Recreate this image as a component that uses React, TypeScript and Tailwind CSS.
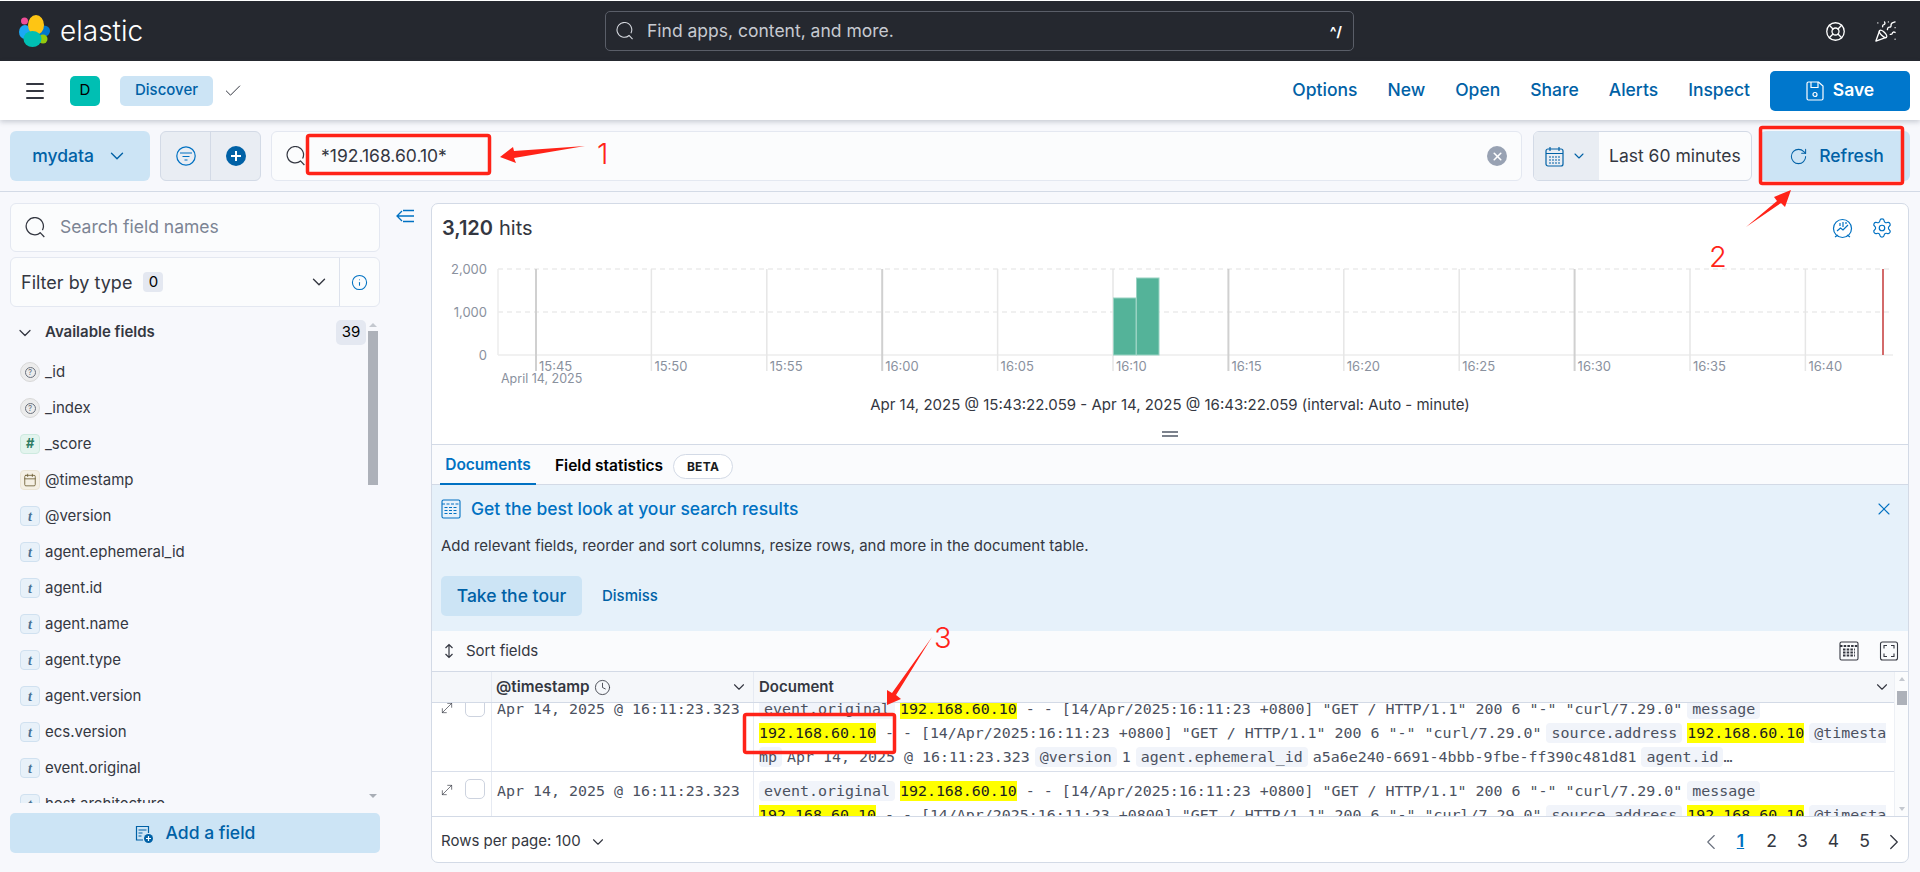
import {
  Menu,
  Check,
  ChevronDown,
  ChevronLeft,
  ChevronRight,
  LifeBuoy,
  PartyPopper,
  RotateCw,
  Calendar,
  Info,
  Settings,
  Clock,
  X,
  MoveDiagonal,
} from "lucide-react";

const fields: [string, string][] = [
  ["_id", "q"],
  ["_index", "q"],
  ["_score", "n"],
  ["@timestamp", "d"],
  ["@version", "t"],
  ["agent.ephemeral_id", "t"],
  ["agent.id", "t"],
  ["agent.name", "t"],
  ["agent.type", "t"],
  ["agent.version", "t"],
  ["ecs.version", "t"],
  ["event.original", "t"],
  ["host.architecture", "t"],
];

const IP = "192.168.60.10";
const LOG = ' - - [14/Apr/2025:16:11:23 +0800] "GET / HTTP/1.1" 200 6 "-" "curl/7.29.0"';
const ticks = ["15:45", "15:50", "15:55", "16:00", "16:05", "16:10", "16:15", "16:20", "16:25", "16:30", "16:35", "16:40"];

function Logo() {
  return (
    <svg width="32" height="32" viewBox="0 0 32 32">
      <ellipse cx="5.5" cy="6" rx="3.5" ry="3.5" fill="#f04e98" />
      <ellipse cx="6" cy="17" rx="6" ry="7" fill="#1ba9f5" />
      <ellipse cx="25" cy="16" rx="6" ry="5.5" fill="#0077cc" />
      <ellipse cx="24" cy="24" rx="4.5" ry="4.5" fill="#93c90e" />
      <ellipse cx="17" cy="10" rx="8" ry="10" fill="#fec514" />
      <ellipse cx="13.5" cy="24" rx="9" ry="8" fill="#00bfb3" />
    </svg>
  );
}

function SearchIcon({ size, color = "#343741" }: { size: number; color?: string }) {
  return (
    <svg width={size} height={size} viewBox="0 0 20 20" fill="none" stroke={color} strokeWidth="1.2" className="shrink-0">
      <path d="M14.6 15A8.2 8.2 0 1 1 16.6 12.5" />
      <path d="M14.2 14.6 18.4 19" />
    </svg>
  );
}

function FieldIcon({ kind }: { kind: string }) {
  if (kind === "q")
    return (
      <span className="w-5 h-5 shrink-0 rounded-full bg-[#ececec] border border-[#d8d8d8] flex items-center justify-center">
        <span className="w-[11px] h-[11px] rounded-full border border-[#69707d] text-[8px] leading-[9px] text-center text-[#69707d]">?</span>
      </span>
    );
  if (kind === "n")
    return (
      <span className="w-5 h-5 shrink-0 rounded-[4px] bg-[#e3f4ee] border border-[#cdeadf] flex items-center justify-center text-[13px] font-bold italic text-[#2f7d64]">#</span>
    );
  if (kind === "d")
    return (
      <span className="w-5 h-5 shrink-0 rounded-[4px] bg-[#f5f0e4] border border-[#ebe4d4] flex items-center justify-center">
        <Calendar size={14} strokeWidth={1.4} className="text-[#69592f]" />
      </span>
    );
  return (
    <span className="w-5 h-5 shrink-0 rounded-[4px] bg-[#e8f1f9] border border-[#d0e1f0] flex items-center justify-center text-[14px] font-bold italic text-[#4a7194] font-['Liberation_Serif',serif]">t</span>
  );
}

function Tag({ children }: { children: React.ReactNode }) {
  return <span className="inline-block h-5 leading-[20px] px-[5px] mr-[5px] rounded-[4px] bg-[#f1f4fa] align-top">{children}</span>;
}

function Mark({ gap }: { gap?: boolean }) {
  return <span className={gap ? "inline-block h-5 leading-[20px] bg-[#ffff00] text-[#1a1c21] align-top mr-[5px]" : "inline-block h-5 leading-[20px] bg-[#ffff00] text-[#1a1c21] align-top"}>{IP}</span>;
}

function Value({ children }: { children: React.ReactNode }) {
  return <span className="inline-block h-5 leading-[20px] mr-[5px] align-top">{children}</span>;
}

function Line({ children }: { children: React.ReactNode }) {
  return <div className="h-6 whitespace-pre overflow-hidden">{children}</div>;
}

function DocRow({ full }: { full?: boolean }) {
  return (
    <div className="flex h-[82px] border-b border-[#d9dfea] font-['DejaVu_Sans_Mono',monospace] text-[14.95px] text-[#4b5160] shrink-0">
      <div className="w-[59px] shrink-0 flex pt-[7px] pl-[7px] gap-[10px]">
        <MoveDiagonal size={16} strokeWidth={1} className="text-[#343741] mt-[3px]" />
        <span className="w-5 h-5 rounded-[5px] border border-[#cdd3df] bg-white" />
      </div>
      <div className="w-[262px] shrink-0 border-l border-[#e6eaf2] pt-[9px] pl-[5px] leading-[20px]">Apr 14, 2025 @ 16:11:23.323</div>
      <div className="flex-1 min-w-0 border-l border-[#e6eaf2] pt-[9px] pl-[5px] pr-[8px]">
        <Line>
          <Tag>event.original</Tag>
          <Mark />
          <Value>{LOG}</Value>
          <Tag>message</Tag>
        </Line>
        <Line>
          <Mark />
          <Value>{LOG}</Value>
          <Tag>source.address</Tag>
          <Mark gap />
          <Tag>@timesta</Tag>
        </Line>
        {full && (
          <Line>
            <span className="inline-block h-5 leading-[20px] pr-[5px] mr-[5px] rounded-[4px] bg-[#f1f4fa] align-top">mp</span>
            <Value>Apr 14, 2025 @ 16:11:23.323</Value>
            <Tag>@version</Tag>
            <Value>1</Value>
            <Tag>agent.ephemeral_id</Tag>
            <Value>a5a6e240-6691-4bbb-9fbe-ff390c481d81</Value>
            <span className="inline-block h-5 leading-[20px] px-[5px] rounded-[4px] bg-[#f1f4fa] align-top">agent.id</span>
            <span className="inline-block h-5 leading-[20px] align-top">…</span>
          </Line>
        )}
      </div>
    </div>
  );
}

function Chart() {
  return (
    <svg className="block w-full h-[138px]" viewBox="432 252 1476 138" fontFamily="Inter, sans-serif" fontSize="13">
      <line x1="498" x2="1893" y1="269" y2="269" stroke="#ececec" strokeWidth="1.5" strokeDasharray="5 4" />
      <line x1="498" x2="1893" y1="312" y2="312" stroke="#ececec" strokeWidth="1.5" strokeDasharray="5 4" />
      <line x1="498" x2="1893" y1="355" y2="355" stroke="#ececec" strokeWidth="1.5" />
      <line x1="498" x2="498" y1="269" y2="355" stroke="#ececec" strokeWidth="1.5" />
      {["2,000", "1,000", "0"].map((t, i) => (
        <text key={t} x="487" y={274 + i * 43} textAnchor="end" fill="#8a919e">{t}</text>
      ))}
      {ticks.map((t, i) => {
        const x = 536 + i * 115.4;
        const major = i % 3 === 0;
        return (
          <g key={t}>
            <line x1={x} x2={x} y1="269" y2="371" stroke={major ? "#d0d0d0" : "#e6e6e6"} strokeWidth={major ? 2 : 1.5} />
            <text x={x + 3} y="371" fill="#8a919e">{t}</text>
          </g>
        );
      })}
      <text x="501" y="383" fontSize="12.5" fill="#8a919e">April 14, 2025</text>
      <rect x="1113.5" y="298" width="22.5" height="57" fill="#54b399" stroke="#98d2c2" strokeWidth="1" />
      <rect x="1136.5" y="278" width="22.5" height="77" fill="#54b399" stroke="#98d2c2" strokeWidth="1" />
      <line x1="1883" x2="1883" y1="269" y2="355" stroke="#d36a6a" strokeWidth="2" />
    </svg>
  );
}

function Annotations() {
  return (
    <svg className="absolute inset-0 pointer-events-none" width="1920" height="872" viewBox="0 0 1920 872" fontFamily="Inter, sans-serif" fontWeight="300" fill="#ff2318">
      <rect x="307.5" y="135.5" width="182" height="38" rx="2" fill="none" stroke="#ff2318" strokeWidth="3.5" />
      <polygon points="585,146 514,151 513,147 500,157 516,163 514,158" />
      <text x="597" y="164" fontSize="29">1</text>
      <rect x="1760.5" y="127.5" width="142" height="56" rx="2" fill="none" stroke="#ff2318" strokeWidth="3.5" />
      <polygon points="1746,227 1777,201 1774,197 1791,190 1785,207 1781,203" />
      <text x="1709" y="267" fontSize="29">2</text>
      <rect x="744.5" y="714.5" width="150" height="38" rx="2" fill="none" stroke="#ff2318" strokeWidth="3.5" />
      <polygon points="932,637 896,695 901,699 887,705 887,690 892,693" />
      <text x="934" y="648" fontSize="29">3</text>
    </svg>
  );
}

export default function App() {
  return (
    <div className="relative w-full h-[872px] overflow-hidden flex flex-col bg-[#f7f8fc] text-[#343741] font-['Inter',sans-serif]">
      {/* global header */}
      <div className="h-[61px] shrink-0 border-t border-white bg-[#25282f] flex items-center relative">
        <div className="flex items-center pl-[19px] w-[605px]">
          <Logo />
          <span className="ml-[9px] text-[28px] font-light text-white leading-none">elastic</span>
        </div>
        <div className="w-[749px] h-10 border border-[#5a5e68] rounded-[5px] flex items-center pl-[10px] pr-[11px] text-[#c7cad1]">
          <SearchIcon size={18} color="#d5d8de" />
          <span className="ml-[13px] text-[17.5px]">Find apps, content, and more.</span>
          <span className="ml-auto text-[14px] font-bold text-white">^/</span>
        </div>
        <LifeBuoy size={21} strokeWidth={1.5} className="ml-[471px] text-white" />
        <PartyPopper size={23} strokeWidth={1.4} className="ml-[28px] text-white" />
      </div>

      {/* app menu */}
      <div className="h-[59px] shrink-0 bg-white flex items-center relative z-10 shadow-[0_2px_5px_rgba(60,70,90,0.25)]">
        <Menu size={24} strokeWidth={2} className="ml-[23px] text-[#343741]" />
        <span className="ml-[23px] w-[30px] h-[30px] rounded-[5px] bg-[#00bfb3] flex items-center justify-center text-[15px] text-black">D</span>
        <span className="ml-5 w-[93px] h-[30px] rounded-[5px] bg-[#cce4f5] flex items-center justify-center text-[15px] font-medium text-[#0061a6]">Discover</span>
        <Check size={20} strokeWidth={1.2} className="ml-[10px] text-[#343741]" />
        <div className="ml-auto flex items-center gap-[30px] text-[17.5px] font-medium text-[#0061a6]">
          <span>Options</span>
          <span>New</span>
          <span>Open</span>
          <span>Share</span>
          <span>Alerts</span>
          <span>Inspect</span>
        </div>
        <div className="ml-5 mr-[10px] w-[140px] h-10 rounded-[5px] bg-[#0077cc] flex items-center justify-center gap-[9px] text-white text-[17.5px] font-semibold">
          <svg width="18" height="20" viewBox="0 0 18 20" fill="none" stroke="#fff" strokeWidth="1.2">
            <path d="M2.5 1h10L17 5v12.5a1.5 1.5 0 0 1-1.5 1.5h-13A1.5 1.5 0 0 1 1 17.5v-15A1.5 1.5 0 0 1 2.5 1Z" />
            <path d="M5 1v5.5h7V1" />
            <circle cx="9" cy="13.5" r="2" />
          </svg>
          Save
        </div>
      </div>

      {/* query bar */}
      <div className="h-[72px] shrink-0 border-b border-[#d3dae6] px-[10px] pt-[11px] flex">
        <div className="w-[140px] h-[50px] rounded-[6px] bg-[#cce4f5] flex items-center justify-center gap-[12px] text-[17.5px] font-medium text-[#0061a6]">
          mydata
          <ChevronDown size={22} strokeWidth={1.5} />
        </div>
        <div className="ml-[10px] w-[101px] h-[50px] rounded-[6px] border border-[#d3dae6] bg-[#e9edf3] flex">
          <div className="w-[50px] flex items-center justify-center border-r border-[#d3dae6]">
            <svg width="20" height="20" viewBox="0 0 20 20" fill="none" stroke="#0071c2" strokeWidth="1.2">
              <circle cx="10" cy="10" r="9.2" />
              <path d="M4 7h12M6.5 10.5h7M8.5 14h3" />
            </svg>
          </div>
          <div className="flex-1 flex items-center justify-center">
            <svg width="20" height="20" viewBox="0 0 20 20">
              <circle cx="10" cy="10" r="10" fill="#0061a6" />
              <path d="M10 5v10M5 10h10" stroke="#fff" strokeWidth="2" />
            </svg>
          </div>
        </div>
        <div className="ml-[10px] w-[1251px] h-[50px] rounded-[6px] border border-[#e4e8f1] bg-[#fbfcfd] flex items-center pl-[14px] pr-[14px]">
          <SearchIcon size={20} />
          <span className="ml-[15px] text-[17.5px]">*192.168.60.10*</span>
          <span className="ml-auto w-5 h-5 rounded-full bg-[#98a2b3] flex items-center justify-center">
            <X size={13} strokeWidth={3} className="text-white" />
          </span>
        </div>
        <div className="ml-[11px] w-[219px] h-[50px] rounded-[6px] border border-[#d3dae6] bg-[#fbfcfd] flex items-center overflow-hidden">
          <div className="w-[65px] h-full bg-[#e9edf3] flex items-center pl-[11px] gap-[7px] text-[#0061a6]">
            <svg width="19" height="21" viewBox="0 0 19 21" fill="none" stroke="currentColor" strokeWidth="1.2">
              <rect x="1" y="3" width="17" height="17" rx="2" />
              <path d="M1 7.5h17M5 1v4M14 1v4M4 11h11M4 14h11M4 17h11" />
              <path d="M6.5 9.5v9M9.5 9.5v9M12.5 9.5v9" stroke="#e9edf3" strokeWidth="1" />
            </svg>
            <ChevronDown size={16} strokeWidth={1.6} />
          </div>
          <span className="ml-[10px] text-[17.5px] whitespace-nowrap">Last 60 minutes</span>
        </div>
        <div className="ml-2 w-[150px] h-[50px] rounded-[6px] bg-[#cce4f5] flex items-center justify-center gap-[11px] pl-[3px] text-[17.5px] font-medium text-[#0061a6]">
          <RotateCw size={19} strokeWidth={1.3} />
          Refresh
        </div>
      </div>

      {/* content */}
      <div className="flex-1 min-h-0 flex">
        {/* sidebar */}
        <div className="w-[381px] shrink-0 flex flex-col pt-[11px] pl-[10px] pr-px">
          <div className="h-[49px] rounded-[6px] border border-[#e4e8f1] bg-[#fbfcfd] flex items-center pl-[14px]">
            <SearchIcon size={21} />
            <span className="ml-[14px] text-[17.5px] text-[#7c8494]">Search field names</span>
          </div>
          <div className="mt-[5px] h-[50px] rounded-[6px] border border-[#e4e8f1] bg-[#fbfcfd] flex items-center pl-[10px]">
            <span className="text-[18px]">Filter by type</span>
            <span className="ml-[11px] w-5 h-5 rounded-[4px] bg-[#e4e8f1] text-[15px] text-black flex items-center justify-center">0</span>
            <ChevronDown size={22} strokeWidth={1.5} className="ml-auto mr-[9px]" />
            <div className="w-10 h-full border-l border-[#dde2ec] flex items-center justify-center">
              <Info size={17} strokeWidth={1.5} className="text-[#0071c2]" />
            </div>
          </div>
          <div className="mt-[13px] h-[483px] flex overflow-hidden">
            <div className="flex-1 min-w-0">
              <div className="h-[25px] flex items-center pl-[5px] pr-[2px]">
                <ChevronDown size={20} strokeWidth={1.5} />
                <span className="ml-[10px] text-[15px] font-semibold">Available fields</span>
                <span className="ml-auto w-[30px] h-[25px] rounded-[5px] bg-[#e4e8f1] text-[15px] text-black flex items-center justify-center">39</span>
              </div>
              <div className="mt-[9px]">
                {fields.map(([name, kind]) => (
                  <div key={name} className="h-9 flex items-center pl-[10px] gap-[5px] text-[15px]">
                    <FieldIcon kind={kind} />
                    <span>{name}</span>
                  </div>
                ))}
              </div>
            </div>
            <div className="w-[10px] mr-[2px] flex flex-col items-center">
              <span className="mt-[3px] w-0 h-0 border-x-[4px] border-x-transparent border-b-[4px] border-b-[#c4c8cf]" />
              <span className="mt-[4px] w-[10px] h-[154px] bg-[#adb1b9]" />
              <span className="mt-auto mb-[5px] w-0 h-0 border-x-[4px] border-x-transparent border-t-[4px] border-t-[#a8adb5]" />
            </div>
          </div>
          <div className="mt-[10px] mb-[19px] h-10 rounded-[5px] bg-[#cce4f5] flex items-center justify-center gap-[13px] pt-[1px] text-[17.5px] font-medium text-[#0061a6]">
            <svg width="18" height="18" viewBox="0 0 18 18" fill="none" stroke="#0061a6" strokeWidth="1.2">
              <path d="M8 15H1.5V1.5h12V8M3.5 5h8M3.5 8h4M3.5 11h3" />
              <circle cx="13.5" cy="13.5" r="4.5" fill="#0061a6" stroke="none" />
              <path d="M13.5 11v5M11 13.5h5" stroke="#fff" />
            </svg>
            Add a field
          </div>
        </div>

        {/* collapse */}
        <div className="w-[50px] shrink-0 pt-[17px] pl-[15px]">
          <svg width="19" height="14" viewBox="0 0 19 14" fill="none" stroke="#0071c2" strokeWidth="1.3">
            <path d="M6 2 1 7l5 5M1 7h17M7 1.5h11M7 12.5h11" />
          </svg>
        </div>

        {/* main card */}
        <div className="w-[1478px] mt-[11px] mb-[9px] rounded-[7px] border border-[#d3dae6] bg-white flex flex-col overflow-hidden">
          <div className="h-[241px] shrink-0 border-b border-[#d3dae6] flex flex-col">
            <div className="h-[48px] shrink-0 flex items-center pl-[10px] pr-[15px] text-[20px]">
              <span className="font-semibold">3,120</span>
              <span className="ml-[6px]">hits</span>
              <svg className="ml-auto text-[#0071c2]" width="21" height="21" viewBox="0 0 21 21" fill="none" stroke="currentColor" strokeWidth="1.2">
                <circle cx="10.5" cy="10.5" r="9" />
                <path d="M5 13l3.5-3 2.5 2 5-5M8 5v3M11 4v5M14 4v2M3 19l3-2M18 19l-3-2" />
              </svg>
              <Settings size={22} strokeWidth={1.3} className="ml-[18px] text-[#0071c2]" />
            </div>
            <Chart />
            <div className="h-[30px] shrink-0 flex items-center justify-center text-[15px]">
              Apr 14, 2025 @ 15:43:22.059 - Apr 14, 2025 @ 16:43:22.059 (interval: Auto - minute)
            </div>
            <div className="flex-1 flex flex-col items-center justify-center gap-[2px] pt-[4px]">
              <span className="w-4 h-[2px] bg-[#7c828d]" />
              <span className="w-4 h-[2px] bg-[#7c828d]" />
            </div>
          </div>

          {/* tabs */}
          <div className="h-10 shrink-0 bg-[#fafbfd] border-b border-[#d3dae6] flex pl-[8px] text-[15.5px] font-semibold">
            <span className="h-10 w-[96px] pt-[2px] flex items-center justify-center text-[#0071c2] border-b-2 border-[#0071c2]">Documents</span>
            <span className="ml-[19px] h-[41px] flex items-center text-black">Field statistics</span>
            <span className="ml-[10px] mt-[9px] h-[25px] w-[60px] rounded-full border border-[#d3dae6] bg-white flex items-center justify-center text-[12px] font-bold text-[#1a1c21] tracking-wide">BETA</span>
          </div>

          {/* callout */}
          <div className="h-[146px] shrink-0 bg-[#e6f1fa] pl-[9px] pr-[14px] pt-[14px]">
            <div className="flex items-center h-5">
              <svg width="20" height="20" viewBox="0 0 20 20" fill="none" stroke="#0071c2" strokeWidth="1.1">
                <rect x="1" y="1" width="18" height="18" rx="1.5" />
                <path d="M1 5h18M3.5 8.5h13M3.5 11.5h13M3.5 14.5h13" strokeDasharray="3 1.5" />
              </svg>
              <span className="ml-[10px] text-[17.5px] font-medium text-[#0071c2]">Get the best look at your search results</span>
              <X size={20} strokeWidth={1.3} className="ml-auto text-[#0071c2]" />
            </div>
            <div className="mt-[17px] text-[15px] leading-5">Add relevant fields, reorder and sort columns, resize rows, and more in the document table.</div>
            <div className="mt-5 flex items-center">
              <span className="w-[141px] h-10 rounded-[5px] bg-[#cce4f5] flex items-center justify-center text-[17.5px] font-medium text-[#0061a6]">Take the tour</span>
              <span className="ml-5 text-[15px] font-medium text-[#0061a6]">Dismiss</span>
            </div>
          </div>

          {/* sort row */}
          <div className="h-10 shrink-0 bg-[#fafbfd] flex items-center pl-[10px] pr-[9px] text-[15px]">
            <svg width="14" height="16" viewBox="0 0 14 16" fill="none" stroke="#343741" strokeWidth="1.2">
              <path d="M3.5 5 7 1.5 10.5 5M3.5 11 7 14.5 10.5 11M7 1.5v13" />
            </svg>
            <span className="ml-[10px]">Sort fields</span>
            <svg className="ml-auto" width="20" height="20" viewBox="0 0 20 20" fill="none" stroke="#343741" strokeWidth="1.1">
              <rect x="1" y="1" width="18" height="18" rx="1.5" />
              <path d="M1 5h18M4 8.5h12M4 11.5h12M4 14.5h12" strokeDasharray="2.5 1.2" strokeWidth="1.8" />
            </svg>
            <svg className="ml-5" width="20" height="20" viewBox="0 0 20 20" fill="none" stroke="#343741" strokeWidth="1.1">
              <rect x="1.5" y="1" width="17" height="18" rx="2" />
              <path d="M8 4.5H5v3M12 4.5h3v3M8 15.5H5v-3M12 15.5h3v-3" />
            </svg>
          </div>

          {/* table */}
          <div className="flex-1 min-h-0 flex border-t border-b border-[#d3dae6]">
            <div className="flex-1 min-w-0 flex flex-col">
              <div className="h-[31px] shrink-0 bg-[#f5f7fa] border-b border-[#d3dae6] flex text-[15px] font-semibold">
                <div className="w-[59px] shrink-0" />
                <div className="w-[262px] shrink-0 border-l border-[#e6eaf2] flex items-center pl-[4px] pr-[5px] text-[15.3px]">
                  @timestamp
                  <Clock size={17} strokeWidth={1.2} className="ml-[5px]" />
                  <ChevronDown size={18} strokeWidth={1.5} className="ml-auto" />
                </div>
                <div className="flex-1 border-l border-[#e6eaf2] flex items-center pl-[5px] pr-[3px]">
                  Document
                  <ChevronDown size={18} strokeWidth={1.5} className="ml-auto" />
                </div>
              </div>
              <div className="flex-1 min-h-0 overflow-hidden">
                <div className="-mt-[13px]">
                  <DocRow full />
                  <DocRow />
                </div>
              </div>
            </div>
            <div className="w-[14px] shrink-0 flex flex-col items-center bg-[#fbfcfd] border-l border-[#edf0f5]">
              <span className="mt-[5px] w-0 h-0 border-x-[3px] border-x-transparent border-b-[4px] border-b-[#c4c8cf]" />
              <span className="mt-[10px] w-[10px] h-[14px] bg-[#adb1b9]" />
              <span className="mt-auto mb-[5px] w-0 h-0 border-x-[3px] border-x-transparent border-t-[4px] border-t-[#c4c8cf]" />
            </div>
          </div>

          {/* footer */}
          <div className="h-[45px] shrink-0 flex items-center pl-[9px] pr-[1px] pt-[4px] text-[15px]">
            <span>Rows per page: 100</span>
            <ChevronDown size={18} strokeWidth={1.5} className="ml-[8px]" />
            <ChevronLeft size={26} strokeWidth={1} className="ml-auto text-[#69707d]" />
            <span className="ml-[1px] w-[31px] text-center text-[17.5px] font-semibold text-[#0071c2] underline">1</span>
            {["2", "3", "4", "5"].map((p) => (
              <span key={p} className="w-[31px] text-center text-[17.5px]">{p}</span>
            ))}
            <ChevronRight size={26} strokeWidth={1.2} className="ml-[1px]" />
          </div>
        </div>
      </div>

      <Annotations />
    </div>
  );
}
